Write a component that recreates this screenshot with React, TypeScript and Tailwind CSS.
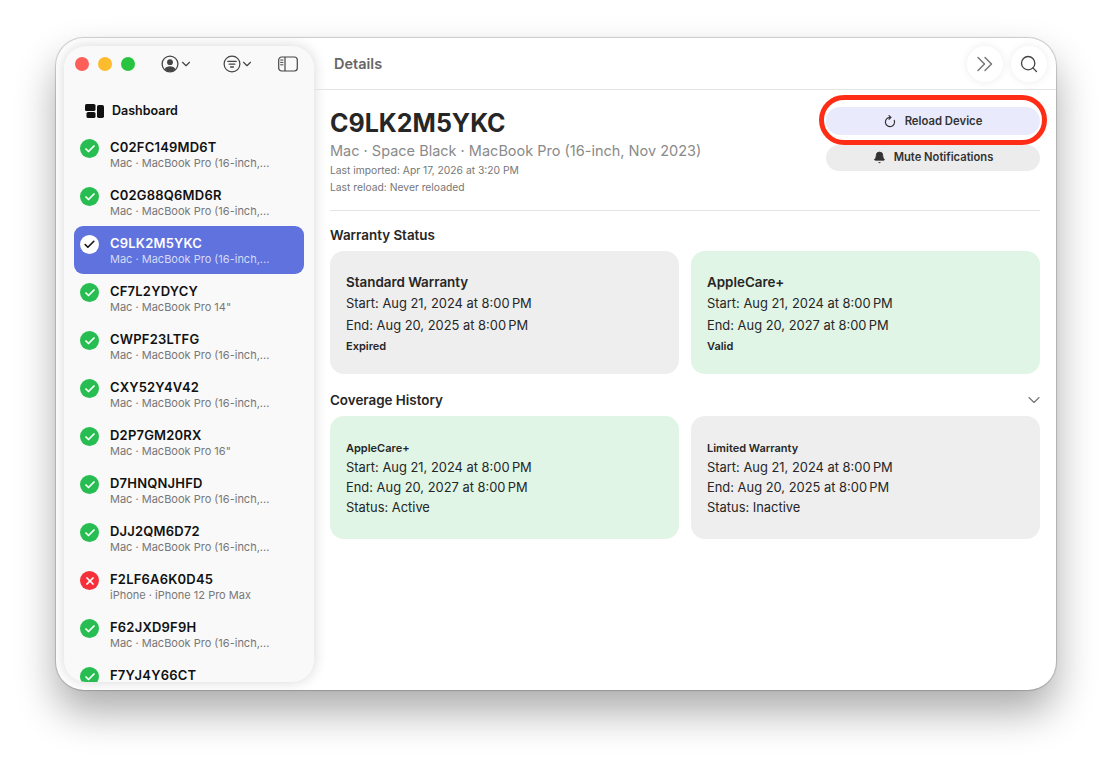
import { Bell, ChevronDown, Check, Search, X } from "lucide-react";

const MBP16 = "Mac · MacBook Pro (16-inch,...";

const devices = [
  { serial: "C02FC149MD6T", sub: MBP16, ok: true },
  { serial: "C02G88Q6MD6R", sub: MBP16, ok: true },
  { serial: "C9LK2M5YKC", sub: MBP16, ok: true, selected: true },
  { serial: "CF7L2YDYCY", sub: "Mac · MacBook Pro 14\"", ok: true },
  { serial: "CWPF23LTFG", sub: MBP16, ok: true },
  { serial: "CXY52Y4V42", sub: MBP16, ok: true },
  { serial: "D2P7GM20RX", sub: "Mac · MacBook Pro 16\"", ok: true },
  { serial: "D7HNQNJHFD", sub: MBP16, ok: true },
  { serial: "DJJ2QM6D72", sub: MBP16, ok: true },
  { serial: "F2LF6A6K0D45", sub: "iPhone · iPhone 12 Pro Max", ok: false },
  { serial: "F62JXD9F9H", sub: MBP16, ok: true },
  { serial: "F7YJ4Y66CT", sub: MBP16, ok: true },
];

function StatusIcon({ ok, selected }: { ok: boolean; selected?: boolean }) {
  if (selected) {
    return (
      <span className="flex h-[19px] w-[19px] shrink-0 items-center justify-center rounded-full bg-white">
        <Check className="h-[13px] w-[13px] text-[#111]" strokeWidth={3} />
      </span>
    );
  }
  return (
    <span className={`flex h-[19px] w-[19px] shrink-0 items-center justify-center rounded-full ${ok ? "bg-[#28bd50]" : "bg-[#f5303a]"}`}>
      {ok ? (
        <Check className="h-[12px] w-[12px] text-white" strokeWidth={3.5} />
      ) : (
        <X className="h-[12px] w-[12px] text-white" strokeWidth={3.5} />
      )}
    </span>
  );
}

function ProfileIcon() {
  return (
    <svg width="18" height="18" viewBox="0 0 18 18" fill="none" className="text-[#444]">
      <circle cx="9" cy="9" r="7.9" stroke="currentColor" strokeWidth="1.3" />
      <circle cx="9" cy="7.2" r="2.9" fill="currentColor" />
      <path d="M3.6 14.2C4.6 12 6.6 11.2 9 11.2s4.4.8 5.4 3C13 15.9 11.1 16.6 9 16.6s-4-.7-5.4-2.4Z" fill="currentColor" />
    </svg>
  );
}

function FilterIcon() {
  return (
    <svg width="18" height="18" viewBox="0 0 18 18" fill="none" stroke="currentColor" strokeLinecap="round" className="text-[#444]">
      <circle cx="9" cy="9" r="7.9" strokeWidth="1.2" />
      <path d="M4.8 6.4h8.4M6.2 9.2h5.6M7.6 12h2.8" strokeWidth="1.3" />
    </svg>
  );
}

function SidebarIcon() {
  return (
    <svg width="20" height="16" viewBox="0 0 20 16" fill="none" className="text-[#444]">
      <rect x="0.7" y="1" width="18.6" height="14" rx="3" stroke="currentColor" strokeWidth="1.2" />
      <path d="M7 1v14" stroke="currentColor" strokeWidth="1.2" />
      <path d="M2.6 4h2.4M2.6 6.4h2.4M2.6 8.8h2.4" stroke="currentColor" strokeWidth="1" strokeLinecap="round" />
    </svg>
  );
}

function DashboardIcon() {
  return (
    <svg width="19" height="14" viewBox="0 0 19 14" fill="#111">
      <rect x="0" y="0" width="10.5" height="7" rx="1.6" />
      <rect x="1.5" y="8" width="9" height="6" rx="1.6" />
      <rect x="12" y="1" width="7" height="13" rx="1.8" />
    </svg>
  );
}

function DoubleChevronIcon() {
  return (
    <svg width="18" height="16" viewBox="0 0 18 16" fill="none" stroke="#777" strokeWidth="1.5" strokeLinecap="round" strokeLinejoin="round">
      <path d="M2 1.5 8.5 8 2 14.5" />
      <path d="M9 1.5 15.5 8 9 14.5" />
    </svg>
  );
}

function ReloadIcon() {
  return (
    <svg width="12" height="13" viewBox="0 0 12 13" fill="none" stroke="#333" strokeWidth="1.2" strokeLinecap="round" strokeLinejoin="round">
      <path d="M6 2.4A4.6 4.6 0 1 0 10.3 5.4" />
      <path d="M5 0.6 7 2.4 5 4.2" />
    </svg>
  );
}

function WarrantyCard({ title, start, end, status, green }: { title: string; start: string; end: string; status: string; green?: boolean }) {
  return (
    <div className={`h-[123px] rounded-[14px] pl-4 pt-[21px] text-[#262626] ${green ? "bg-[#e0f5e6]" : "bg-[#eeeeee]"}`}>
      <div className="text-[13.4px] font-semibold leading-[20px]">{title}</div>
      <div className="mt-px text-[12.9px] leading-[21px]">Start: {start}</div>
      <div className="mt-px text-[12.9px] leading-[22px]">End: {end}</div>
      <div className="-mt-px text-[11px] font-semibold leading-[20px]">{status}</div>
    </div>
  );
}

function HistoryCard({ title, start, end, status, green }: { title: string; start: string; end: string; status: string; green?: boolean }) {
  return (
    <div className={`h-[123px] rounded-[14px] pl-4 pt-[23px] text-[#262626] ${green ? "bg-[#e0f5e6]" : "bg-[#eeeeee]"}`}>
      <div className="text-[11px] font-semibold leading-[19px]">{title}</div>
      <div className="text-[12.9px] leading-[20px]">Start: {start}</div>
      <div className="text-[12.9px] leading-[20px]">End: {end}</div>
      <div className="text-[12.9px] leading-[20px]">Status: {status}</div>
    </div>
  );
}

export default function App() {
  return (
    <div className="h-[764px] w-[1112px] overflow-hidden bg-white pl-[56px] pt-[38px] font-['Inter','Liberation_Sans',sans-serif]">
      <div className="flex h-[652px] w-[1000px] overflow-hidden rounded-[28px] bg-white shadow-[0_0_1px_1px_rgba(0,0,0,0.18),0_22px_40px_rgba(0,0,0,0.33)]">
        {/* sidebar */}
        <div className="w-[258px] shrink-0 py-2 pl-2">
          <div className="flex h-[636px] w-[250px] flex-col overflow-hidden rounded-[22px] bg-[#f9f9f9] shadow-[0_0_14px_rgba(0,0,0,0.16)]">
            <div className="flex h-9 shrink-0 items-center pl-[11px]">
              <span className="h-[14px] w-[14px] rounded-full bg-[#fb5f57]" />
              <span className="ml-[9px] h-[14px] w-[14px] rounded-full bg-[#fdbc2e]" />
              <span className="ml-[9px] h-[14px] w-[14px] rounded-full bg-[#29c43f]" />
              <span className="ml-[26px] flex items-center">
                <ProfileIcon />
                <ChevronDown className="h-[14px] w-[14px] text-[#444]" strokeWidth={2} />
              </span>
              <span className="ml-[30px] flex items-center">
                <FilterIcon />
                <ChevronDown className="-ml-px h-[14px] w-[14px] text-[#444]" strokeWidth={2} />
              </span>
              <span className="ml-[24px]"><SidebarIcon /></span>
            </div>
            <div className="mt-[9px] flex h-10 shrink-0 items-center gap-[8px] pl-[21px] text-[12.5px] font-semibold text-[#111]">
              <DashboardIcon />
              Dashboard
            </div>
            <div className="-mt-px flex flex-col">
              {devices.map((d) => (
                <div
                  key={d.serial}
                  className={`mx-[10px] flex h-[48px] shrink-0 items-start gap-[11px] rounded-[9px] pl-[6px] ${d.selected ? "bg-[#5f72dd]" : ""}`}
                >
                  <div className="pt-[9px]">
                    <StatusIcon ok={d.ok} selected={d.selected} />
                  </div>
                  <div className="min-w-0 pt-[9px]">
                    <div className={`text-[13px] font-semibold leading-[17px] tracking-[0.2px] ${d.selected ? "text-white" : "text-[#111]"}`}>{d.serial}</div>
                    <div className={`text-[11px] leading-[15px] ${d.selected ? "text-[#d5daf6]" : "text-[#777]"}`}>{d.sub}</div>
                  </div>
                </div>
              ))}
            </div>
          </div>
        </div>

        {/* details */}
        <div className="relative min-w-0 flex-1">
          <div className="flex h-[52px] items-center justify-between border-b border-[#e4e4e4] pl-5 pr-[9px]">
            <span className="text-[14.5px] font-semibold text-[#666]">Details</span>
            <div className="flex items-center gap-2">
              <span className="flex h-9 w-9 items-center justify-center rounded-full bg-white shadow-[0_0_8px_rgba(0,0,0,0.08)]">
                <DoubleChevronIcon />
              </span>
              <span className="flex h-9 w-9 items-center justify-center rounded-full bg-white shadow-[0_0_8px_rgba(0,0,0,0.08)]">
                <Search className="h-[20px] w-[20px] text-[#444]" strokeWidth={1.6} />
              </span>
            </div>
          </div>

          <div className="px-4">
            <div className="flex h-[121px] justify-between border-b border-[#e4e4e4]">
              <div className="pt-[18px]">
                <div className="text-[25px] font-bold leading-[30px] text-[#262626]">C9LK2M5YKC</div>
                <div className="mt-[3px] text-[14.5px] leading-[20px] text-[#8a8a8a]">Mac · Space Black · MacBook Pro (16-inch, Nov 2023)</div>
                <div className="mt-[1px] text-[10.3px] leading-[16px] text-[#777]">Last imported: Apr 17, 2026 at 3:20 PM</div>
                <div className="mt-[1px] text-[10.3px] leading-[16px] text-[#777]">Last reload: Never reloaded</div>
              </div>
              <div className="w-[214px] pt-[17px]">
                <div className="flex h-[28px] items-center justify-center gap-[9px] rounded-full bg-[#e9eafb] text-[11.3px] font-semibold text-[#333]">
                  <ReloadIcon />
                  Reload Device
                </div>
                <div className="mt-[10px] flex h-[26px] items-center justify-center gap-[8px] rounded-full bg-[#ececec] pb-[1px] text-[11.2px] font-semibold text-[#333]">
                  <Bell className="h-[13px] w-[13px]" fill="currentColor" strokeWidth={1.5} />
                  Mute Notifications
                </div>
              </div>
            </div>

            <div className="mt-[15px] text-[13.4px] font-semibold leading-[18px] text-[#262626]">Warranty Status</div>
            <div className="mt-[7px] grid grid-cols-2 gap-3">
              <WarrantyCard title="Standard Warranty" start={"Aug 21, 2024 at 8:00\u202fPM"} end={"Aug 20, 2025 at 8:00\u202fPM"} status="Expired" />
              <WarrantyCard green title="AppleCare+" start={"Aug 21, 2024 at 8:00\u202fPM"} end={"Aug 20, 2027 at 8:00\u202fPM"} status="Valid" />
            </div>

            <div className="mt-[17px] flex h-[18px] items-center justify-between text-[13.4px] font-semibold text-[#262626]">
              Coverage History
              <ChevronDown className="-mr-[4px] h-[20px] w-[20px] text-[#777]" strokeWidth={1.4} />
            </div>
            <div className="mt-[7px] grid grid-cols-2 gap-3">
              <HistoryCard green title="AppleCare+" start={"Aug 21, 2024 at 8:00\u202fPM"} end={"Aug 20, 2027 at 8:00\u202fPM"} status="Active" />
              <HistoryCard title="Limited Warranty" start={"Aug 21, 2024 at 8:00\u202fPM"} end={"Aug 20, 2025 at 8:00\u202fPM"} status="Inactive" />
            </div>
          </div>

          {/* annotation ring */}
          <div className="absolute left-[505px] top-[57px] h-[50px] w-[228px] rounded-[25px] border-[5px] border-[#ff2d16]" />
        </div>
      </div>
    </div>
  );
}
